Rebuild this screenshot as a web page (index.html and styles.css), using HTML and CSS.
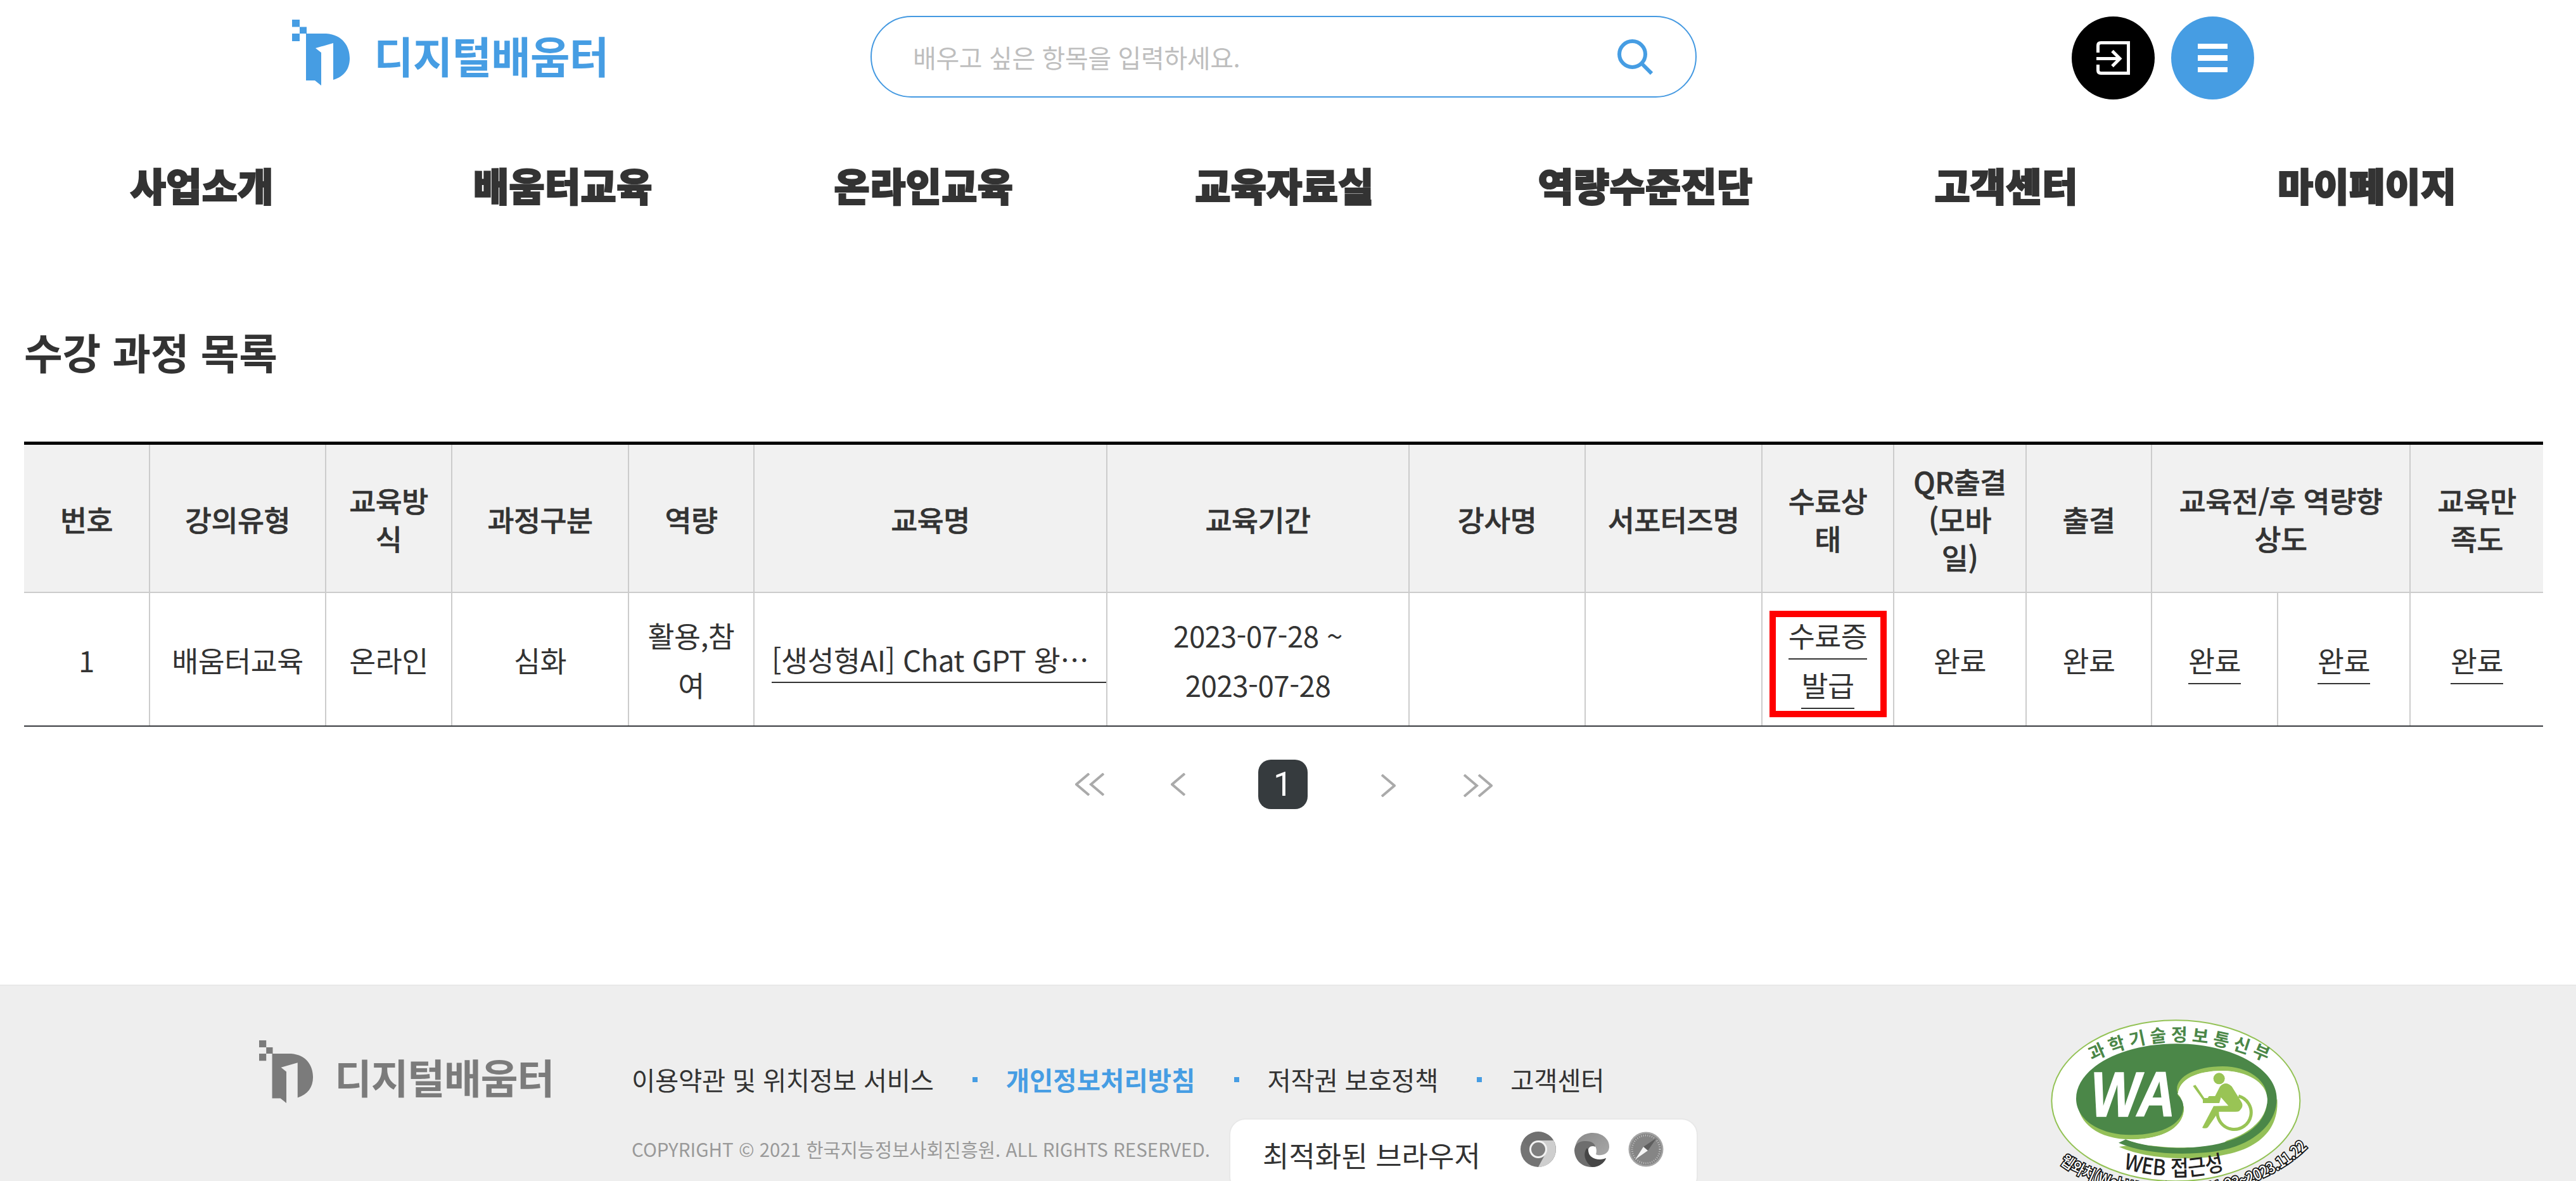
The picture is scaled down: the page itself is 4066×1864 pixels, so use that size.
FILE: index.html
```html
<!DOCTYPE html>
<html lang="ko">
<head>
  <meta charset="UTF-8" />
  <meta name="viewport" content="width=device-width, initial-scale=1.0" />
  <title>디지털배움터</title>
  <link rel="stylesheet" href="styles.css">
</head>
<body>

  <!-- logo mark shared by the header and the footer -->
  <svg width="0" height="0" class="defs">
    <symbol id="mark" viewBox="0 0 92 104" preserveAspectRatio="none">
      <path d="M0 0H12V11.5H0zM12 11.5H23V22H12zM0 22H12V34H0z" />
      <path d="M22 22H54C80 24 91 42 91 61C91 78 82 90 65 95V37L37 45L46 52V104L36 96H22z" />
    </symbol>
  </svg>

  <div class="page">
    <header class="header">
      <a class="logo" href="#">
        <svg class="logo-mark"><use href="#mark" /></svg>
        <span>디지털배움터</span>
      </a>
      <form class="search">
        <input type="text" placeholder="배우고 싶은 항목을 입력하세요." />
        <svg class="search-icon" viewBox="0 0 56 56"><circle cx="23.5" cy="23.5" r="20.5" /><path d="M38 38L54 54" /></svg>
      </form>
      <div class="util">
        <button class="round black">
          <svg viewBox="0 0 53 53"><path d="M2.5 18V7Q2.5 2.5 7 2.5H50.5V50.5H7Q2.5 50.5 2.5 46V37M0 27.5H36M25 15.5L37 27.5L25 39.5" /></svg>
        </button>
        <button class="round blue"><i></i><i></i><i></i></button>
      </div>
    </header>

    <nav class="gnb">
      <a href="#">사업소개</a>
      <a href="#">배움터교육</a>
      <a href="#">온라인교육</a>
      <a href="#">교육자료실</a>
      <a href="#">역량수준진단</a>
      <a href="#">고객센터</a>
      <a href="#">마이페이지</a>
    </nav>

    <main class="content">
      <h1>수강 과정 목록</h1>
      <table>
        <colgroup>
          <col class="w199"><col class="w278"><col class="w199"><col class="w279"><col class="w198">
          <col class="w557"><col class="w477"><col class="w278"><col class="w279"><col class="w208">
          <col class="w209"><col class="w198"><col class="w199"><col class="w209"><col class="w209">
        </colgroup>
        <thead>
          <tr>
            <th>번호</th>
            <th>강의유형</th>
            <th>교육방<br>식</th>
            <th>과정구분</th>
            <th>역량</th>
            <th>교육명</th>
            <th>교육기간</th>
            <th>강사명</th>
            <th>서포터즈명</th>
            <th>수료상<br>태</th>
            <th>QR출결<br>(모바<br>일)</th>
            <th>출결</th>
            <th colspan="2">교육전/후 역량향<br>상도</th>
            <th>교육만<br>족도</th>
          </tr>
        </thead>
        <tbody>
          <tr>
            <td>1</td>
            <td>배움터교육</td>
            <td>온라인</td>
            <td>심화</td>
            <td>활용,참<br>여</td>
            <td class="subject"><a href="#">[생성형AI] Chat GPT 왕⋯</a></td>
            <td>2023-07-28 ~<br>2023-07-28</td>
            <td></td>
            <td></td>
            <td class="cert"><a href="#">수료증<br>발급</a></td>
            <td>완료</td>
            <td>완료</td>
            <td><a href="#">완료</a></td>
            <td><a href="#">완료</a></td>
            <td><a href="#">완료</a></td>
          </tr>
        </tbody>
      </table>

      <div class="paging">
        <a class="first" href="#"><svg viewBox="0 0 46 36"><path d="M22 1L2 18L22 35M45 1L25 18L45 35" /></svg></a>
        <a class="prev" href="#"><svg viewBox="0 0 23 36"><path d="M22 1L2 18L22 35" /></svg></a>
        <strong>1</strong>
        <a class="next" href="#"><svg viewBox="0 0 23 36"><path d="M1 1L21 18L1 35" /></svg></a>
        <a class="last" href="#"><svg viewBox="0 0 46 36"><path d="M1 1L21 18L1 35M24 1L44 18L24 35" /></svg></a>
      </div>
    </main>
  </div>

  <footer class="footer">
    <a class="logo" href="#">
      <svg class="logo-mark"><use href="#mark" /></svg>
      <span>디지털배움터</span>
    </a>
    <div class="info">
      <ul class="links">
        <li><a href="#">이용약관 및 위치정보 서비스</a></li>
        <li><a class="privacy" href="#">개인정보처리방침</a></li>
        <li><a href="#">저작권 보호정책</a></li>
        <li><a href="#">고객센터</a></li>
      </ul>
      <div class="bottom">
        <p class="copy">COPYRIGHT © 2021 한국지능정보사회진흥원. ALL RIGHTS RESERVED.</p>
        <div class="browser">
          <span>최적화된 브라우저</span>
          <!-- chrome -->
          <svg viewBox="0 0 56 56">
            <circle cx="28" cy="28" r="28" fill="#747474" />
            <path d="M4 14A28 28 0 0 1 52 14H28L14 26z" fill="#707070" />
            <path d="M28 14H52A28 28 0 0 1 28 56L41 32z" fill="#cecece" />
            <circle cx="28" cy="28" r="14" fill="#f2f2f2" />
            <circle cx="28" cy="28" r="11" fill="#7e7e7e" />
          </svg>
          <!-- edge -->
          <svg viewBox="0 0 56 56">
            <defs>
              <linearGradient id="eg" x1="0" y1="0" x2="1" y2="1"><stop offset="0" stop-color="#8a8a8a" /><stop offset="1" stop-color="#a8a8a8" /></linearGradient>
            </defs>
            <path d="M1 26C3 11 14 2 29 2C45 2 56 13 55 25C54 37 40 39 34 36C36 30 35 22 28 19C16 14 6 20 1 26z" fill="url(#eg)" />
            <path d="M0 30C0 19 9 14 18 15C28 15 33 20 33 24C27 21 21 25 22 31C23 42 36 48 50 42C47 50 38 56 28 56C12 56 1 46 0 30z" fill="#6e6e6e" />
            <path d="M20 26C13 34 16 48 28 56C38 56 47 50 50 42C38 47 21 42 22 29z" fill="#464646" />
          </svg>
          <!-- safari -->
          <svg viewBox="0 0 56 56">
            <circle cx="28" cy="28" r="27.5" fill="#a5a5a5" />
            <circle cx="28" cy="28" r="25" fill="#858585" />
            <circle cx="28" cy="28" r="22" fill="none" stroke="#c4c4c4" stroke-width="3" stroke-dasharray="1 2.4" />
            <path d="M45 10L24 24L31 30z" fill="#5e5e5e" />
            <path d="M11 44L24 24L31 30z" fill="#f4f4f4" />
          </svg>
        </div>
      </div>
    </div>
    <!-- web accessibility mark -->
    <svg class="wa" viewBox="0 0 1380 852">
      <defs>
        <path id="arcTop" d="M300 287Q703 93 1130 287" />
        <path id="arcWeb" d="M440 788Q700 870 970 788" />
        <path id="arcOut" d="M150 765C400 960 1000 1010 1322 698L1400 620" />
      </defs>
      <ellipse cx="703" cy="472" rx="588" ry="381" fill="#fff" stroke="#93c255" stroke-width="6" />
      <path d="M238 485C248 590 350 655 490 655C640 655 742 600 742 505L720 440z" fill="#94c058" />
      <path d="M434 690C600 765 900 760 1040 695C1140 648 1190 570 1183 465L1120 500L900 700L500 680z" fill="#94c058" />
      <path d="M432 671L466 655C600 708 820 708 960 660C1080 620 1136 550 1136 465C1128 380 1040 315 925 312C790 312 705 365 712 445C735 470 740 480 738 512C730 585 630 634 490 634C340 634 231 560 231 462C231 320 440 202 706 202C970 202 1181 320 1181 462C1181 590 1060 690 870 715C700 732 540 718 432 671z" fill="#4b8748" />
      <path d="M709 425C700 360 795 309 925 309C1040 309 1125 370 1133 440C1110 375 1020 330 925 330C800 332 720 370 713 440z" fill="#94c058" />
      <path d="M713 440C720 370 800 330 925 330C1045 330 1136 390 1136 465C1136 600 960 696 706 694C600 692 520 675 466 655C600 660 735 620 742 515C742 470 725 455 713 440z" fill="#fff" />
      <g fill="none" stroke="#99c455">
        <path d="M1000 450A80 80 0 1 1 900 520" stroke-width="15" />
      </g>
      <g fill="#99c455">
        <circle cx="908" cy="367" r="27" />
        <path d="M784 402L796 397L838 459H854L860 450H889L912 405Q938 375 968 404L1015 480Q1026 500 1003 521Q998 524 985 524H906L855 598Q846 606 828 600L882 497L952 496L917 456L909 483H831V467z" />
      </g>
      <text class="wa-big" x="300" y="547" textLength="400" lengthAdjust="spacingAndGlyphs">WA</text>
      <text class="wa-top"><textPath href="#arcTop" startOffset="6" textLength="856">과학기술정보통신부</textPath></text>
      <text class="wa-web"><textPath href="#arcWeb" startOffset="15" textLength="485" lengthAdjust="spacingAndGlyphs">WEB 접근성</textPath></text>
      <text class="wa-out"><textPath href="#arcOut" startOffset="4" textLength="1262" lengthAdjust="spacingAndGlyphs">웹와치(WebWatch) 2022.11.23~2023.11.22</textPath></text>
    </svg>
  </footer>

</body>
</html>
```
FILE: styles.css
```css
*, *::before, *::after {
  box-sizing: border-box;
}
body {
  margin: 0;
  height: 1864px;
  overflow: hidden;
  background: #fff;
  color: #333;
  font-family: "Noto Sans CJK KR", sans-serif;
}
a {
  color: inherit;
  text-decoration: none;
}
.defs {
  display: block;
}
.page {
  width: 4051px;
  height: 1554px;
}

/* header */
.header {
  display: grid;
  grid-template-columns: 913px 1304px 592px 288px;
  padding: 25px 0 0 461px;
  height: 252px;
  align-items: start;
}
.logo {
  display: flex;
  color: #469de3;
}
.logo-mark {
  width: 92px;
  height: 104px;
  fill: currentColor;
}
.header .logo {
  padding-top: 6px;
}
.logo span {
  font-size: 68px;
  font-weight: 700;
  line-height: 100px;
  letter-spacing: -0.8px;
  margin: 6px 0 0 37px;
  white-space: nowrap;
}
.search {
  display: flex;
  align-items: center;
  justify-content: space-between;
  height: 129px;
  padding: 0 67px 0 65px;
  border: 2px solid #4499e1;
  border-radius: 65px;
}
.search input {
  width: 900px;
  padding: 0;
  border: none;
  outline: none;
  font: 40px/60px "Noto Sans CJK KR", sans-serif;
  letter-spacing: -0.4px;
}
.search input::placeholder {
  color: #bebebe;
}
.search-icon {
  width: 56px;
  height: 56px;
  fill: none;
  stroke: #469de3;
  stroke-width: 6;
}
.util {
  grid-column: 4;
  display: flex;
  gap: 26px;
  padding-top: 1px;
}
.round {
  display: flex;
  flex-direction: column;
  align-items: center;
  justify-content: center;
  gap: 10px;
  width: 131px;
  height: 131px;
  padding: 0;
  border: none;
  border-radius: 50%;
}
.black {
  background: #000;
}
.black svg {
  width: 53px;
  height: 53px;
  fill: none;
  stroke: #fff;
  stroke-width: 5;
}
.blue {
  background: #469de3;
}
.blue i {
  width: 47px;
  height: 8.5px;
  background: #fff;
}

/* navigation */
.gnb {
  display: grid;
  grid-template-columns: repeat(7, 1fr);
  padding: 0 30px 0 34px;
  text-align: center;
  font-size: 61px;
  font-weight: 900;
  line-height: 80px;
  letter-spacing: 0.4px;
  -webkit-text-stroke: 2.2px #333;
}

/* course list */
.content {
  padding: 177px 36px 0 38px;
}
h1 {
  margin: 0 0 98px;
  font-size: 66px;
  font-weight: 700;
  line-height: 90px;
  letter-spacing: -0.2px;
}
table {
  width: 3976px;
  table-layout: fixed;
  border-collapse: separate;
  border-spacing: 0;
  border-top: 5px solid #000;
  border-bottom: 2px solid #373a3e;
  font-size: 45.7px;
  letter-spacing: -0.5px;
  text-align: center;
  white-space: nowrap;
}
.w198 { width: 198px; }
.w199 { width: 199px; }
.w208 { width: 208px; }
.w209 { width: 209px; }
.w278 { width: 278px; }
.w279 { width: 279px; }
.w477 { width: 477px; }
.w557 { width: 557px; }
th, td {
  padding: 1px 0 0;
  border-right: 2px solid #ccc;
}
th:last-child, td:last-child {
  border-right: none;
}
th {
  height: 234px;
  background: #f1f1f1;
  border-bottom: 2px solid #ccc;
  font-weight: 500;
  line-height: 60px;
  -webkit-text-stroke: 0.6px #333;
}
td {
  height: 209px;
  line-height: 78px;
}
td a {
  padding-bottom: 4px;
  border-bottom: 2px solid #333;
}
td.subject {
  padding-left: 27px;
  text-align: left;
}
.subject a {
  display: block;
  padding-bottom: 0;
  line-height: 72px;
}
.cert {
  position: relative;
}
.cert::after {
  content: "";
  position: absolute;
  left: 11px;
  top: 28px;
  width: 185px;
  height: 168px;
  border: 10px solid #f00;
}

.paging {
  display: flex;
  justify-content: center;
  align-items: center;
  margin-top: 52px;
  height: 78px;
}
.paging svg {
  display: block;
  height: 36px;
  fill: none;
  stroke: #aaa;
  stroke-width: 4;
}
.paging strong {
  width: 78px;
  height: 78px;
  margin: 0 116px 0 115px;
  border-radius: 20px;
  background: #363b3e;
  color: #fff;
  text-align: center;
  font-family: Roboto, sans-serif;
  font-size: 53px;
  font-weight: 400;
  line-height: 79px;
}
.first { margin-right: 105px; }
.last { margin-left: 107px; }
.next, .last { padding-top: 4px; }

/* footer */
.footer {
  display: grid;
  grid-template-columns: 588px 2203px 460px;
  height: 310px;
  padding-left: 409px;
  background: #eee;
  border-top: 2px solid #e8e8e8;
}
.footer .logo {
  padding-top: 86px;
  color: #7b7b7b;
}
.footer .logo-mark {
  width: 86px;
  height: 99px;
}
.footer .logo span {
  font-size: 64px;
  letter-spacing: -1.2px;
  margin: 6px 0 0 33px;
}
.links {
  display: flex;
  margin: 0;
  padding: 116px 0 0;
  list-style: none;
  font-size: 40.5px;
  line-height: 64px;
  letter-spacing: -0.3px;
  white-space: nowrap;
}
.links li {
  display: flex;
  align-items: center;
}
.links li + li::before {
  content: "";
  width: 8px;
  height: 8px;
  margin: 0 45px 0 61px;
  background: #469de3;
}
.links .privacy {
  color: #469de3;
  font-weight: 700;
  letter-spacing: 0.1px;
}
.bottom {
  display: flex;
  align-items: flex-start;
  padding-top: 29px;
}
.copy {
  width: 943px;
  margin: 24px 0 0;
  color: #999;
  font-size: 29.5px;
  line-height: 48px;
  white-space: nowrap;
}
.browser {
  display: flex;
  width: 740px;
  height: 118px;
  padding: 19px 0 0 51px;
  background: #fff;
  border: 2px solid #e8e8e8;
  border-radius: 26px;
  white-space: nowrap;
}
.browser span {
  flex: none;
  width: 407px;
  margin-top: 2px;
  font-size: 45px;
  line-height: 70px;
}
.browser svg {
  flex: none;
  width: 56px;
  height: 56px;
  margin-right: 29px;
}
.wa {
  width: 460px;
  height: 284px;
  margin-top: 24px;
}
.wa-big {
  font: italic 700 300px "Liberation Sans", sans-serif;
  fill: #fff;
  stroke: #fff;
  stroke-width: 5;
}
.wa-top {
  font-size: 84px;
  font-weight: 700;
  fill: #4b8748;
}
.wa-web {
  font-size: 104px;
  font-weight: 500;
  fill: #222;
}
.wa-out {
  font-size: 72px;
  font-weight: 500;
  fill: #fff;
  stroke: #111;
  stroke-width: 11;
  paint-order: stroke;
}
```
